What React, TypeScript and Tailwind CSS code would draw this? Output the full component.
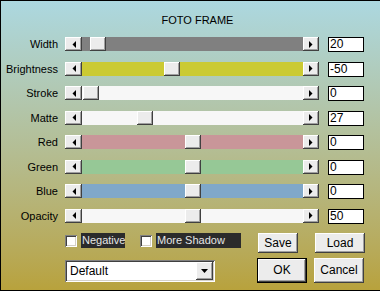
import React from 'react'

const font = "font-['Liberation_Sans',Arial,sans-serif]"
const raised =
  'bg-[#ececec] shadow-[inset_-1px_-1px_0_#404040,inset_1px_1px_0_#ffffff,inset_-2px_-2px_0_#a0a0a0]'
const sunken =
  'bg-white shadow-[inset_1px_1px_0_#808080,inset_-1px_-1px_0_#ffffff,inset_2px_2px_0_#404040,inset_-2px_-2px_0_#d4d0c8]'

interface Row {
  label: string
  value: string
  thumb: number
  track: string
}

const rows: Row[] = [
  { label: 'Width', value: '20', thumb: 8, track: 'bg-[#808080]' },
  { label: 'Brightness', value: '-50', thumb: 82, track: 'bg-[#cbca33]' },
  { label: 'Stroke', value: '0', thumb: 1, track: 'bg-[#f7f7f7]' },
  { label: 'Matte', value: '27', thumb: 55, track: 'bg-[#f7f7f7]' },
  { label: 'Red', value: '0', thumb: 103, track: 'bg-[#c99699]' },
  { label: 'Green', value: '0', thumb: 103, track: 'bg-[#96c896]' },
  { label: 'Blue', value: '0', thumb: 103, track: 'bg-[#80a8c9]' },
  { label: 'Opacity', value: '50', thumb: 103, track: 'bg-[#f7f7f7]' },
]

function Arrow({ dir }: { dir: 'left' | 'right' }) {
  return (
    <svg width="4" height="7" viewBox="0 0 4 7">
      <polygon points={dir === 'left' ? '4,0 4,7 0.5,3.5' : '0,0 0,7 3.5,3.5'} fill="#000" />
    </svg>
  )
}

function SliderRow({ label, value, thumb, track }: Row) {
  return (
    <div className="flex items-start h-[14px]">
      <div className="w-[57px] text-right text-[11px] leading-[14px] text-black">{label}</div>
      <div className="flex ml-[7px] h-[14px]">
        <div className={`w-[17px] h-[14px] flex items-center justify-center ${raised}`}>
          <Arrow dir="left" />
        </div>
        <div className={`relative w-[221px] h-[14px] ${track}`}>
          <div className={`absolute top-0 w-[16px] h-[14px] ${raised}`} style={{ left: thumb }} />
        </div>
        <div className={`w-[16px] h-[14px] flex items-center justify-center ${raised}`}>
          <Arrow dir="right" />
        </div>
      </div>
      <div className="ml-[9px] w-[36px] h-[15px] bg-white border border-black text-[12px] leading-[13px] pl-[1px] text-black">
        {value}
      </div>
    </div>
  )
}

function Check({ label, width }: { label: string; width?: string }) {
  return (
    <div className="flex items-start">
      <div className={`mt-[2px] w-[12px] h-[12px] ${sunken}`} />
      <div className={`ml-[4px] h-[15px] bg-[#2b2b2b] text-[#e6e6e6] text-[11px] leading-[15px] pl-[1px] ${width ?? ''}`}>
        {label}
      </div>
    </div>
  )
}

function Button({ label, w, h, isDefault }: { label: string; w: string; h: string; isDefault?: boolean }) {
  return (
    <div className={`${w} ${h} ${isDefault ? 'border border-black' : ''}`}>
      <div className={`w-full h-full flex items-center justify-center text-[12px] text-black ${raised}`}>{label}</div>
    </div>
  )
}

export default function App() {
  return (
    <div
      className={`w-[380px] h-[291px] border-t border-l border-b border-black bg-linear-to-b from-[#acd8e0] to-[#b8a23c] ${font}`}
    >
      <div className="pt-[12px] h-[26px] text-center text-[11px] leading-[14px] text-black pl-[14px]">FOTO FRAME</div>
      <div className="mt-[10px] flex flex-col gap-[10.5px]">
        {rows.map((r) => (
          <SliderRow key={r.label} {...r} />
        ))}
      </div>
      <div className="mt-[10px] flex items-start pl-[64px]">
        <Check label="Negative" width="w-[44px]" />
        <div className="ml-[15px]">
          <Check label="More Shadow" width="w-[85px] ml-[-1px]" />
        </div>
        <div className="ml-[17px]">
          <Button label="Save" w="w-[40px]" h="h-[20px]" />
        </div>
        <div className="ml-[17px]">
          <Button label="Load" w="w-[50px]" h="h-[20px]" />
        </div>
      </div>
      <div className="mt-[5px] flex items-start pl-[64px]">
        <div className={`mt-[2px] w-[150px] h-[22px] flex items-center justify-between pl-[5px] pr-[2px] ${sunken}`}>
          <span className="text-[12px] text-black">Default</span>
          <div className={`w-[17px] h-[18px] flex items-center justify-center ${raised}`}>
            <svg width="7" height="4" viewBox="0 0 7 4">
              <polygon points="0,0 7,0 3.5,4" fill="#000" />
            </svg>
          </div>
        </div>
        <div className="ml-[42px]">
          <Button label="OK" w="w-[50px]" h="h-[25px]" isDefault />
        </div>
        <div className="ml-[7px]">
          <Button label="Cancel" w="w-[50px]" h="h-[25px]" />
        </div>
      </div>
    </div>
  )
}
